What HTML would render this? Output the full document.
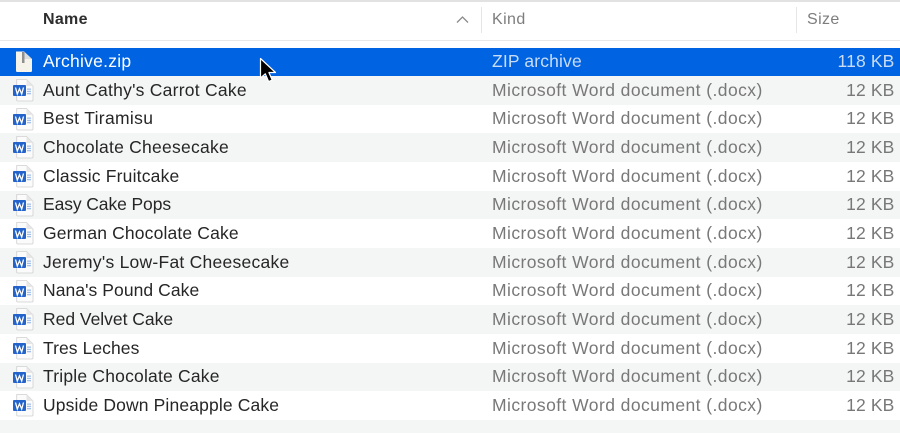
<!DOCTYPE html>
<html><head><meta charset="utf-8"><style>
html,body{margin:0;padding:0;background:#fff}
#p{position:relative;width:900px;height:433px;overflow:hidden;background:#fff;font-family:"Liberation Sans",sans-serif;font-size:17.5px;color:#262626}
.r{position:absolute;left:0;width:900px;height:28.67px;line-height:28.67px;white-space:nowrap}
.g{background:#f4f5f5}
.n,.k,.s{position:absolute;top:-.4px}
.n{left:43px;letter-spacing:.25px}.k{left:492px;color:#787878;letter-spacing:.43px}.s{right:5.5px;color:#787878;letter-spacing:.15px}
.sel{background:#0063e1;color:#fff}
.sel .k,.sel .s{color:#c9dcf7}
.i{position:absolute;left:13px;top:3px}
.h{position:absolute;top:9.500px;line-height:20px;font-size:16px;color:#7d7d7d;letter-spacing:.4px}
.d{position:absolute;top:7px;width:1.5px;height:26px;background:#e6e6e6}
</style></head><body><div id="p">
<svg width="0" height="0" style="position:absolute"><defs>
<symbol id="w" viewBox="0 0 21 23">
<path d="M3.700 .5H13.500L20 7V21a1 1 0 0 1-1 1H4.700a1 1 0 0 1-1-1Z" fill="#fbfbfb" stroke="#cfcfcf" stroke-width=".8"/>
<path d="M13.500 .5V7H20Z" fill="#e6e6e6"/>
<rect x="14" y="9.500" width="4" height="1.300" fill="#a3c0ea"/><rect x="14" y="11.800" width="4" height="1.300" fill="#a3c0ea"/><rect x="14" y="14" width="4" height="1.300" fill="#a3c0ea"/>
<rect x="0" y="6" width="13" height="11" rx="1" fill="#2463c9"/>
<path d="M2.500 8.500L4.300 15L6.500 9.800L8.700 15L10.500 8.500" fill="none" stroke="#fff" stroke-width="1.300"/>
</symbol>
</defs></svg>
<div style="position:absolute;left:0;top:0;width:900px;height:2px;background:#e2e2e2"></div>
<div class="h" style="left:43px;font-weight:bold;color:#2e2e2e;letter-spacing:.3px">Name</div>
<svg style="position:absolute;left:456px;top:15px" width="13" height="9"><path d="M1 7.500L6.500 2L12 7.500" fill="none" stroke="#8a8a8a" stroke-width="1.300"/></svg>
<div class="d" style="left:480.500px"></div>
<div class="h" style="left:492px">Kind</div>
<div class="d" style="left:795.500px"></div>
<div class="h" style="left:807px">Size</div>
<div style="position:absolute;left:0;top:39.500px;width:900px;height:1.500px;background:#e8e8e8"></div>
<div class="r sel" style="top:47.500px;height:28.500px">
<svg width="20" height="22" viewBox="0 0 20 22" style="position:absolute;left:13px;top:3px"><path d="M3 .5H11L19 8V20a1.200 1.200 0 0 1-1 1H4a1.200 1.200 0 0 1-1-1Z" fill="#f6f3ea"/><path d="M11 .5V8H19Z" fill="#dcdcdc"/><rect x="9" y="1" width="2.500" height="11" fill="#8f8f8f"/></svg>
<span class="n" style="top:-1px">Archive.zip</span><span class="k" style="top:-1px;letter-spacing:.15px">ZIP archive</span><span class="s" style="top:-1px">118 KB</span></div>
<div class="r g" style="top:76px"><svg class="i" width="21" height="23"><use href="#w"/></svg><span class="n">Aunt Cathy's Carrot Cake</span><span class="k">Microsoft Word document (.docx)</span><span class="s">12 KB</span></div>
<div class="r" style="top:104.670px"><svg class="i" width="21" height="23"><use href="#w"/></svg><span class="n" style="letter-spacing:.33px">Best Tiramisu</span><span class="k">Microsoft Word document (.docx)</span><span class="s">12 KB</span></div>
<div class="r g" style="top:133.340px"><svg class="i" width="21" height="23"><use href="#w"/></svg><span class="n">Chocolate Cheesecake</span><span class="k">Microsoft Word document (.docx)</span><span class="s">12 KB</span></div>
<div class="r" style="top:162px"><svg class="i" width="21" height="23"><use href="#w"/></svg><span class="n" style="letter-spacing:.19px">Classic Fruitcake</span><span class="k">Microsoft Word document (.docx)</span><span class="s">12 KB</span></div>
<div class="r g" style="top:190.670px"><svg class="i" width="21" height="23"><use href="#w"/></svg><span class="n" style="letter-spacing:-.1px">Easy Cake Pops</span><span class="k">Microsoft Word document (.docx)</span><span class="s">12 KB</span></div>
<div class="r" style="top:219.340px"><svg class="i" width="21" height="23"><use href="#w"/></svg><span class="n" style="letter-spacing:.15px">German Chocolate Cake</span><span class="k">Microsoft Word document (.docx)</span><span class="s">12 KB</span></div>
<div class="r g" style="top:248px"><svg class="i" width="21" height="23"><use href="#w"/></svg><span class="n">Jeremy's Low-Fat Cheesecake</span><span class="k">Microsoft Word document (.docx)</span><span class="s">12 KB</span></div>
<div class="r" style="top:276.670px"><svg class="i" width="21" height="23"><use href="#w"/></svg><span class="n" style="letter-spacing:.07px">Nana's Pound Cake</span><span class="k">Microsoft Word document (.docx)</span><span class="s">12 KB</span></div>
<div class="r g" style="top:305.340px"><svg class="i" width="21" height="23"><use href="#w"/></svg><span class="n" style="letter-spacing:-.02px">Red Velvet Cake</span><span class="k">Microsoft Word document (.docx)</span><span class="s">12 KB</span></div>
<div class="r" style="top:334px"><svg class="i" width="21" height="23"><use href="#w"/></svg><span class="n" style="letter-spacing:.07px">Tres Leches</span><span class="k">Microsoft Word document (.docx)</span><span class="s">12 KB</span></div>
<div class="r g" style="top:362.670px"><svg class="i" width="21" height="23"><use href="#w"/></svg><span class="n" style="letter-spacing:.2px">Triple Chocolate Cake</span><span class="k">Microsoft Word document (.docx)</span><span class="s">12 KB</span></div>
<div class="r" style="top:391.340px"><svg class="i" width="21" height="23"><use href="#w"/></svg><span class="n" style="letter-spacing:.14px">Upside Down Pineapple Cake</span><span class="k">Microsoft Word document (.docx)</span><span class="s">12 KB</span></div>
<div style="position:absolute;left:0;top:420px;width:900px;height:13px;background:#f4f5f5"></div>
<svg style="position:absolute;left:258px;top:57px" width="22" height="28" viewBox="0 0 22 28"><path d="M2.500 1.500V21L7.300 16.800L10.600 24.500L14.200 23L10.900 15.500H17.500Z" fill="#000" stroke="#fff" stroke-width="1.200" stroke-linejoin="round"/></svg>
</div></body></html>
